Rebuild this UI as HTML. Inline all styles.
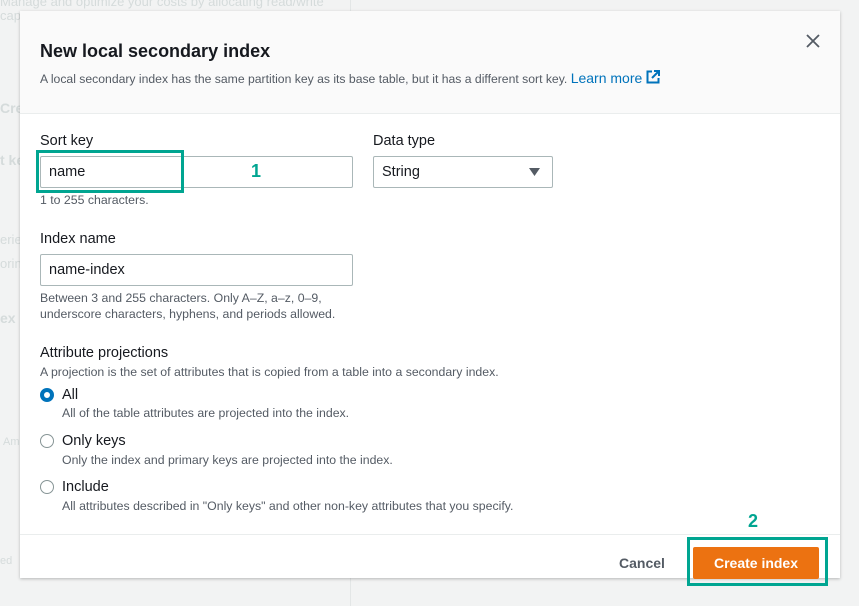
<!DOCTYPE html>
<html><head><style>
*{box-sizing:border-box;margin:0;padding:0}
body{width:859px;height:606px;overflow:hidden;background:#f2f3f3;font-family:"Liberation Sans",Arial,sans-serif;color:#16191f;position:relative}
.bg{position:absolute;color:#d5dbdb;font-size:13px}
.modal{position:absolute;left:20px;top:11px;width:820px;height:567px;background:#fff;box-shadow:0 1px 3px rgba(0,0,0,.25)}
.hdr{height:103px;background:#fafafa;border-bottom:1px solid #eaeded;padding:28px 20px 0 20px;position:relative}
h1{font-size:18px;font-weight:bold;line-height:24px}
.sub{font-size:12.2px;color:#545b64;margin-top:7px}
.sub a{color:#0073bb;font-size:14px;text-decoration:none}
.x{position:absolute;right:20px;top:23px}
.abs{position:absolute}
.lbl{font-size:14.5px}
.inp{border:1px solid #aab7b8;border-radius:2px;height:32px;font-size:14.5px;padding:7px 8px;background:#fff}
.hint{font-size:12.3px;color:#545b64;line-height:16px}
.foot{position:absolute;left:0;right:0;top:523px;border-top:1px solid #eaeded}
.radio{position:absolute;width:14px;height:14px;border-radius:50%;border:1.5px solid #879596;background:#fff}
.teal{border:3px solid #00a591;position:absolute}
.num{position:absolute;color:#00a591;font-weight:bold;font-size:18px}
</style></head><body>
<div class="bg" style="left:0;top:-6px">Manage and optimize your costs by allocating read/write</div>
<div class="bg" style="left:0;top:8px">capa</div>
<div class="bg" style="left:0;top:100px;font-size:14px;font-weight:bold">Cre</div>
<div class="bg" style="left:0;top:152px;font-size:14px;font-weight:bold">t ke</div>
<div class="bg" style="left:0;top:232px">erie</div>
<div class="bg" style="left:0;top:256px">orin</div>
<div class="bg" style="left:0;top:310px;font-size:14px;font-weight:bold">ex</div>
<div class="bg" style="left:3px;top:436px;font-size:11px">Am</div>
<div class="bg" style="left:0;top:555px;font-size:11px">ed</div>
<div style="position:absolute;left:350px;top:0;width:1px;height:606px;background:#e3e6e6"></div>
<div class="modal">
 <div class="hdr">
  <h1>New local secondary index</h1>
  <div class="sub">A local secondary index has the same partition key as its base table, but it has a different sort key. <a>Learn more <svg width="14" height="14" viewBox="0 0 14 14" style="vertical-align:-1px"><path d="M6 1.5H1.5v11h11V8" fill="none" stroke="#0073bb" stroke-width="2"/><path d="M8 1h5v5M13 1L6 8" fill="none" stroke="#0073bb" stroke-width="2"/></svg></a></div>
  <svg class="x" width="14" height="14" viewBox="0 0 14 14"><path d="M1 1l12 12M13 1L1 13" stroke="#545b64" stroke-width="1.8"/></svg>
 </div>
 <div class="abs lbl" style="left:20px;top:122px">Sort key</div>
 <div class="abs inp" style="left:20px;top:145px;width:313px">name</div>
 <div class="abs hint" style="left:20px;top:181px">1 to 255 characters.</div>
 <div class="abs lbl" style="left:353px;top:122px">Data type</div>
 <div class="abs inp" style="left:353px;top:145px;width:180px">String<svg style="position:absolute;right:12px;top:11px" width="11" height="8"><path d="M0 0h11L5.5 8z" fill="#545b64"/></svg></div>
 <div class="abs lbl" style="left:20px;top:220px">Index name</div>
 <div class="abs inp" style="left:20px;top:243px;width:313px">name-index</div>
 <div class="abs hint" style="left:20px;top:279px">Between 3 and 255 characters. Only A–Z, a–z, 0–9,<br>underscore characters, hyphens, and periods allowed.</div>
 <div class="abs lbl" style="left:20px;top:334px">Attribute projections</div>
 <div class="abs hint" style="left:20px;top:353px">A projection is the set of attributes that is copied from a table into a secondary index.</div>
 <div class="radio" style="left:20px;top:377px;border:4px solid #0073bb"></div>
 <div class="abs lbl" style="left:42px;top:376px">All</div>
 <div class="abs hint" style="left:42px;top:394px">All of the table attributes are projected into the index.</div>
 <div class="radio" style="left:20px;top:423px"></div>
 <div class="abs lbl" style="left:42px;top:422px">Only keys</div>
 <div class="abs hint" style="left:42px;top:441px">Only the index and primary keys are projected into the index.</div>
 <div class="radio" style="left:20px;top:469px"></div>
 <div class="abs lbl" style="left:42px;top:468px">Include</div>
 <div class="abs hint" style="left:42px;top:487px">All attributes described in "Only keys" and other non-key attributes that you specify.</div>
 <div class="foot"></div>
 <div class="abs" style="left:599px;top:544px;font-size:14px;font-weight:bold;color:#545b64">Cancel</div>
 <div class="abs" style="left:673px;top:536px;width:126px;height:32px;background:#ec7211;border-radius:2px;color:#fff;font-weight:bold;font-size:14px;text-align:center;line-height:32px">Create index</div>
</div>
<div class="teal" style="left:36px;top:150px;width:148px;height:43px"></div>
<div class="num" style="left:251px;top:161px">1</div>
<div class="num" style="left:748px;top:511px">2</div>
<div class="teal" style="left:687px;top:537px;width:141px;height:49px"></div>
</body></html>
